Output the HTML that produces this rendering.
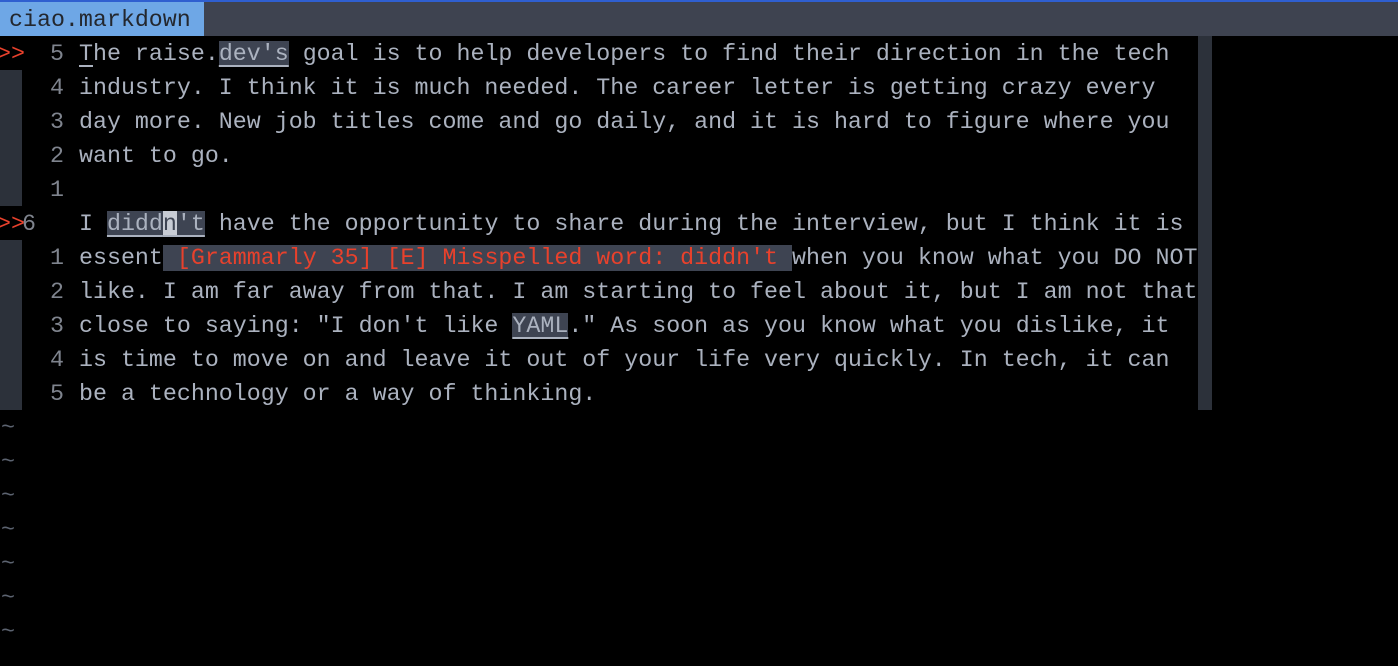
<!DOCTYPE html>
<html><head><meta charset="utf-8"><style>
html,body{margin:0;padding:0;background:#000;width:1398px;height:666px;overflow:hidden}
body{font-family:"Liberation Mono","DejaVu Sans Mono",monospace;font-size:23.3px;color:#abb2bf;position:relative}
.top{position:absolute;left:0;top:0;width:1398px;height:2px;background:#2f5fd0}
.bar{position:absolute;left:0;top:2px;width:1398px;height:34px;background:#3e4350}
.tab{position:absolute;left:0;top:2px;width:204px;height:34px;background:#6ea7e6;color:#23272e;line-height:36px;padding-left:9px;box-sizing:border-box}
.ln{position:absolute;left:0;height:34px;line-height:36px;white-space:pre;width:1398px}
.sg{position:absolute;left:0;top:0;width:22px;height:34px;background:#2c313a}
.red{color:#e8412c}
.num{position:absolute;right:1334px;top:0;color:#7f848e}
.txt{position:absolute;left:79px;top:0}
.hl{background:#3e4452;text-decoration:underline;text-underline-offset:5px;text-decoration-color:#abb2bf}
.cur{background:#c8ccd4;color:#3e4452}
.pop{background:#3e4452;color:#e8412c}
.col{position:absolute;left:1198px;top:36px;width:14px;height:374px;background:#2c313a}
.t{position:absolute;left:1px;color:#5c6370;line-height:36px}
</style></head><body>
<div class="top"></div><div class="bar"></div><div class="tab">ciao.markdown</div>
<div class="col"></div>
<div class="ln" style="top:36px"><span class="red" style="position:absolute;left:-3px">&gt;&gt;</span><span class="num">5</span><span class="txt"><span style="text-decoration:underline;text-underline-offset:5px">T</span>he raise.<span class="hl">dev's</span> goal is to help developers to find their direction in the tech</span></div>
<div class="ln" style="top:70px"><div class="sg"></div><span class="num">4</span><span class="txt">industry. I think it is much needed. The career letter is getting crazy every</span></div>
<div class="ln" style="top:104px"><div class="sg"></div><span class="num">3</span><span class="txt">day more. New job titles come and go daily, and it is hard to figure where you</span></div>
<div class="ln" style="top:138px"><div class="sg"></div><span class="num">2</span><span class="txt">want to go.</span></div>
<div class="ln" style="top:172px"><div class="sg"></div><span class="num">1</span></div>
<div class="ln" style="top:206px"><span class="red" style="position:absolute;left:-3px">&gt;&gt;</span><span style="position:absolute;left:22px;color:#7f848e">6</span><span class="txt">I <span class="hl">didd<span class="cur">n</span>'t</span> have the opportunity to share during the interview, but I think it is</span></div>
<div class="ln" style="top:240px"><div class="sg"></div><span class="num">1</span><span class="txt">essent<span class="pop"> [Grammarly 35] [E] Misspelled word: diddn't </span>when you know what you DO NOT</span></div>
<div class="ln" style="top:274px"><div class="sg"></div><span class="num">2</span><span class="txt">like. I am far away from that. I am starting to feel about it, but I am not that</span></div>
<div class="ln" style="top:308px"><div class="sg"></div><span class="num">3</span><span class="txt">close to saying: "I don't like <span class="hl">YAML</span>." As soon as you know what you dislike, it</span></div>
<div class="ln" style="top:342px"><div class="sg"></div><span class="num">4</span><span class="txt">is time to move on and leave it out of your life very quickly. In tech, it can</span></div>
<div class="ln" style="top:376px"><div class="sg"></div><span class="num">5</span><span class="txt">be a technology or a way of thinking.</span></div>
<div class="t" style="top:410px">~</div>
<div class="t" style="top:444px">~</div>
<div class="t" style="top:478px">~</div>
<div class="t" style="top:512px">~</div>
<div class="t" style="top:546px">~</div>
<div class="t" style="top:580px">~</div>
<div class="t" style="top:614px">~</div>
</body></html>
